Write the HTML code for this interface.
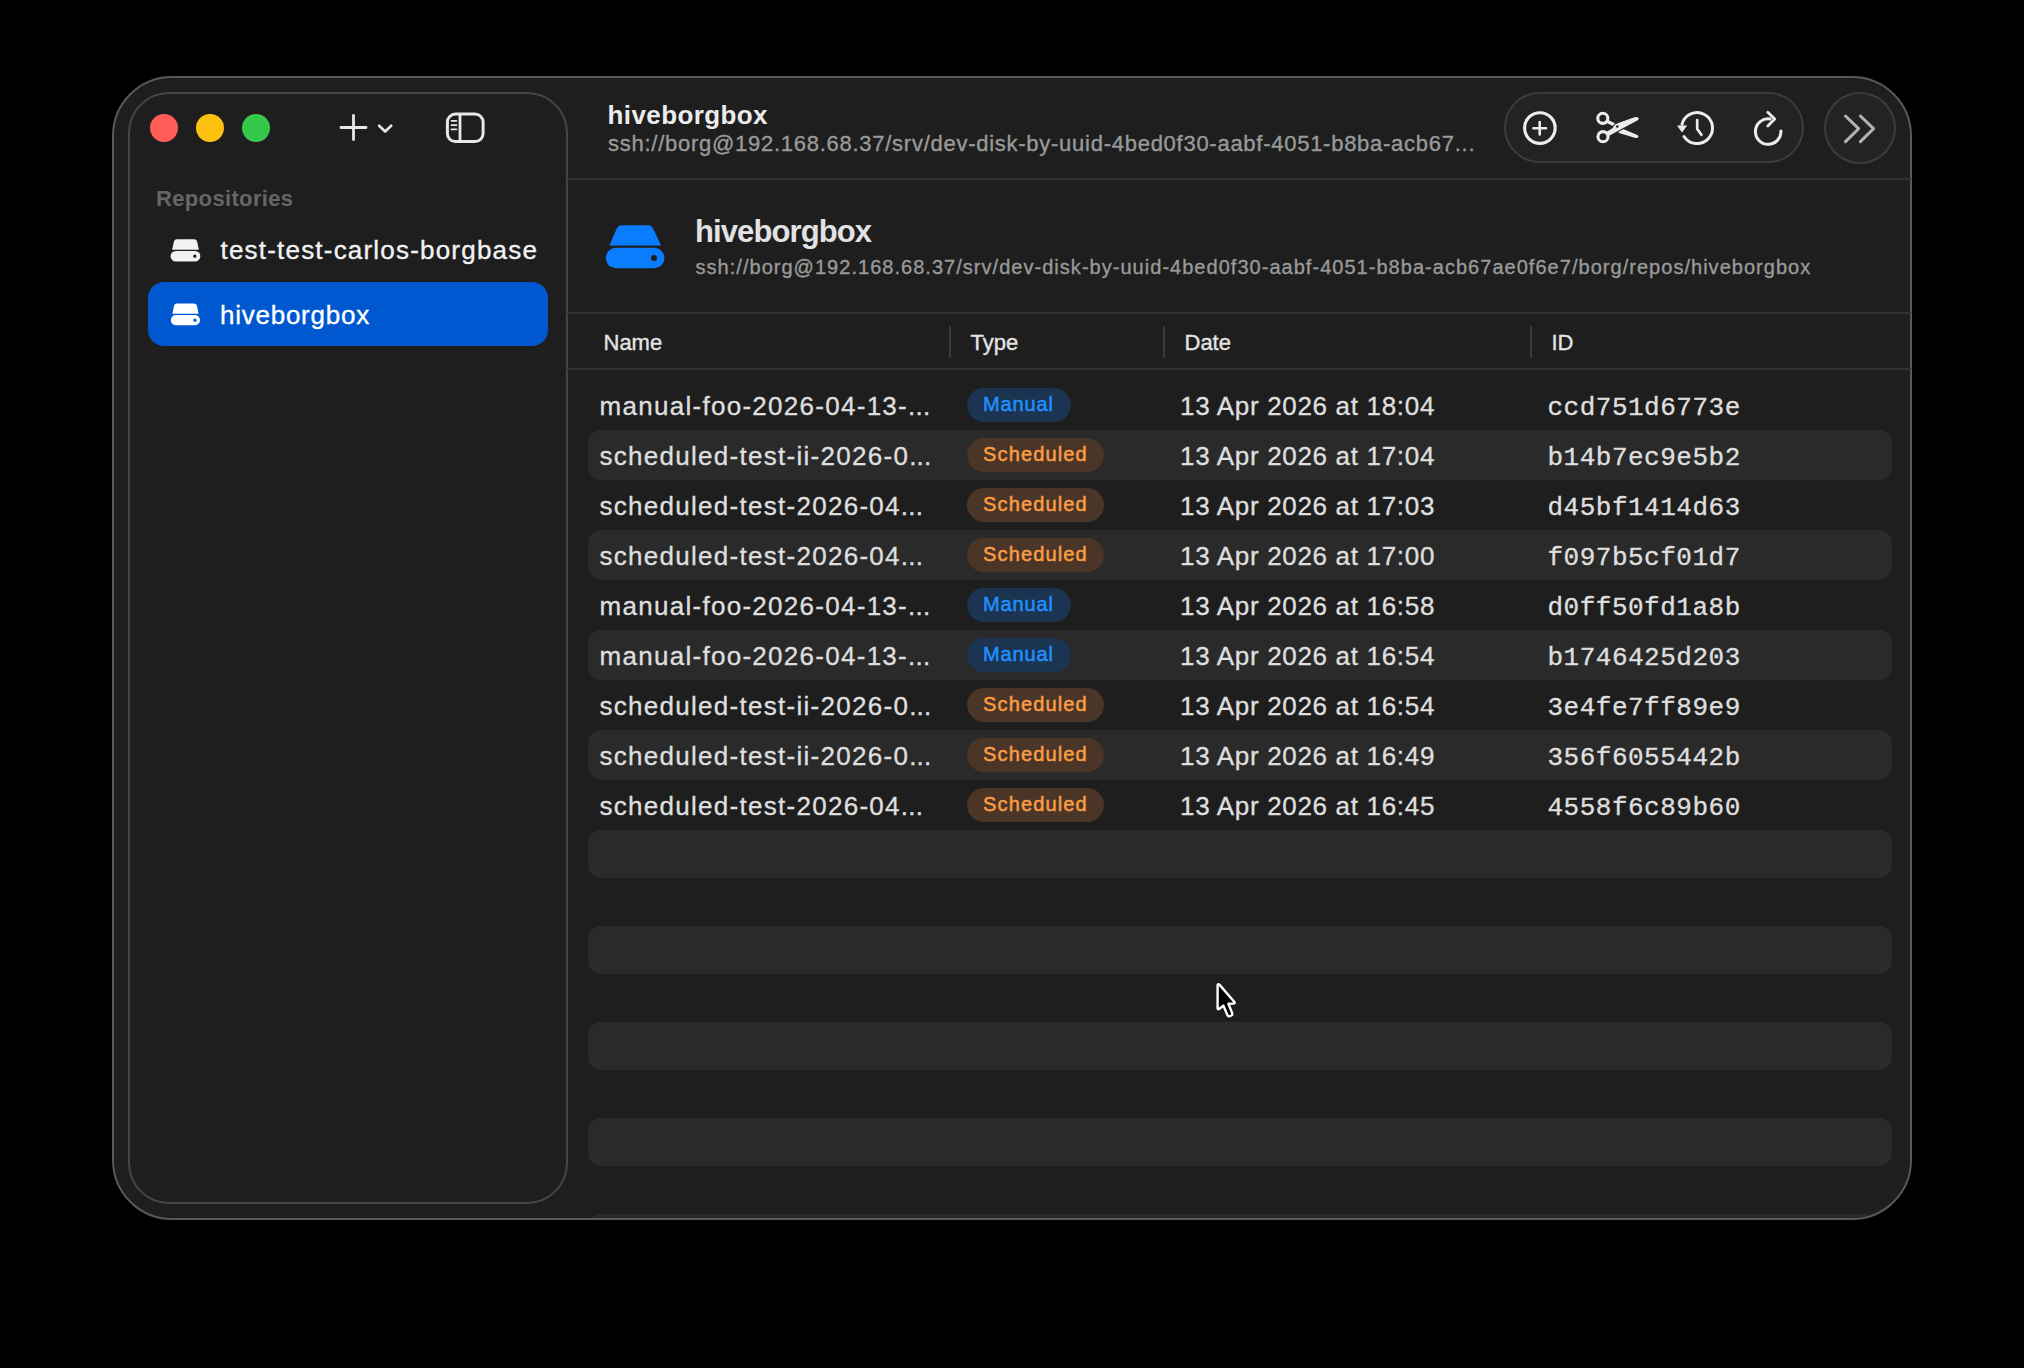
<!DOCTYPE html>
<html><head><meta charset="utf-8">
<style>
html,body{margin:0;padding:0;width:2024px;height:1368px;overflow:hidden;background:#000;}
body{font-family:"Liberation Sans",sans-serif;position:relative;}
.a{position:absolute;}
.t{position:absolute;white-space:pre;line-height:1;-webkit-text-stroke:0.35px currentColor;}
.win{left:112px;top:76px;width:1796px;height:1140px;border:2px solid #585858;border-radius:60px;background:#1e1e1e;overflow:hidden;}
.side{left:128px;top:92px;width:436px;height:1108px;border:2px solid #444444;border-radius:41px;background:#1e1e1e;}
.light{width:28px;height:28px;border-radius:50%;top:114px;}
.hl{height:2px;background:#313131;}
.vl{width:2px;background:#3a3a3a;top:326px;height:32px;}
.strip{left:588px;width:1304px;background:#2a2a2a;border-radius:13px;}
.name{left:599.5px;font-size:26px;letter-spacing:1.28px;color:#dedede;}
.dots{letter-spacing:0.2px;}
.date{left:1180px;font-size:26px;letter-spacing:0.68px;color:#dedede;}
.id{left:1547.5px;font-family:"Liberation Mono",monospace;font-size:26px;letter-spacing:0.5px;color:#dedede;}
.badge{left:967px;height:34px;border-radius:17px;}
.badge span{position:absolute;left:16px;top:0;white-space:pre;line-height:1;font-size:20px;font-weight:400;-webkit-text-stroke:0.5px currentColor;}
.man{width:104px;background:#1b3452;}
.man span{color:#2190ff;letter-spacing:0.85px;}
.sch{width:137px;background:#4a3526;}
.sch span{color:#fb9d45;letter-spacing:1.15px;}
.btn{border:2px solid #3c3c3c;background:#232323;}
</style></head>
<body>
<div class="a win"><div class="a strip" style="left:474px;top:1136px;height:48px;"></div></div>
<div class="a side"></div>

<!-- traffic lights -->
<div class="a light" style="left:150px;background:#ff5b57;"></div>
<div class="a light" style="left:196px;background:#fdc10f;"></div>
<div class="a light" style="left:242px;background:#34c84a;"></div>

<!-- plus + chevron -->
<svg class="a" style="left:330px;top:105px" width="70" height="45" viewBox="330 105 70 45">
  <path d="M353.5 115.5 V139.5 M341 127.5 H366" stroke="#e8e8e8" stroke-width="2.8" stroke-linecap="round" fill="none"/>
  <path d="M379.1 125.7 L385.2 131.5 L391.2 125.7" stroke="#e8e8e8" stroke-width="2.6" stroke-linecap="round" stroke-linejoin="round" fill="none"/>
</svg>
<!-- sidebar toggle -->
<svg class="a" style="left:440px;top:105px" width="52" height="45" viewBox="440 105 52 45">
  <rect x="447.4" y="114.1" width="35.7" height="27.5" rx="8" stroke="#e8e8e8" stroke-width="3" fill="none"/>
  <path d="M460 114 V141" stroke="#e8e8e8" stroke-width="2.8"/>
  <path d="M451.5 120.8 H456.4 M451.5 125.2 H456.4 M451.5 129.4 H456.4" stroke="#e8e8e8" stroke-width="1.8" stroke-linecap="round"/>
</svg>

<!-- sidebar -->
<div class="t" style="left:156px;top:188px;font-size:22px;font-weight:700;letter-spacing:0.35px;color:#666666;-webkit-text-stroke:0;">Repositories</div>
<svg class="a" style="left:168px;top:236px" width="36" height="30" viewBox="168 236 36 30">
  <path d="M177 239.3 H194.2 Q196.4 239.3 197.1 241.4 L198.9 249.7 H172.1 L173.9 241.4 Q174.6 239.3 177 239.3 Z" fill="#f2f2f2"/>
  <rect x="170.6" y="251" width="29.7" height="10.5" rx="5.2" fill="#f2f2f2"/>
  <circle cx="194.8" cy="256.2" r="1.6" fill="#1e1e1e"/>
</svg>
<div class="t" style="left:220.5px;top:237px;font-size:26px;letter-spacing:1.2px;color:#f2f2f2;">test-test-carlos-borgbase</div>
<div class="a" style="left:148px;top:282px;width:400px;height:64px;border-radius:16px;background:#0058d0;"></div>
<svg class="a" style="left:168px;top:300px" width="36" height="30" viewBox="168 300 36 30">
  <path d="M177 303.5 H194 Q196.2 303.5 196.9 305.6 L198.6 313.8 H172.4 L174.1 305.6 Q174.8 303.5 177 303.5 Z" fill="#ffffff"/>
  <rect x="170.8" y="315" width="29.2" height="10.3" rx="5.1" fill="#ffffff"/>
  <circle cx="195" cy="320.2" r="1.6" fill="#0058d0"/>
</svg>
<div class="t" style="left:220px;top:302px;font-size:26px;letter-spacing:0.75px;color:#ffffff;">hiveborgbox</div>

<!-- toolbar -->
<div class="t" style="left:607.5px;top:101.5px;font-size:26px;font-weight:700;letter-spacing:0.4px;color:#ececec;-webkit-text-stroke:0;">hiveborgbox</div>
<div class="t" style="left:608px;top:133px;font-size:22px;letter-spacing:0.735px;color:#9a9a9a;">ssh://borg@192.168.68.37/srv/dev-disk-by-uuid-4bed0f30-aabf-4051-b8ba-acb67...</div>
<div class="a hl" style="left:567px;top:178px;width:1344px;"></div>

<div class="a btn" style="left:1504px;top:92px;width:296px;height:67px;border-radius:36px;"></div>
<div class="a btn" style="left:1824px;top:92px;width:68px;height:68px;border-radius:50%;"></div>

<svg class="a" style="left:1500px;top:90px" width="420" height="80" viewBox="1500 90 420 80">
  <g stroke="#ececec" fill="none" stroke-linecap="round">
    <circle cx="1539.85" cy="128.05" r="15.3" stroke-width="3.2"/>
    <path d="M1539.7 122 V134.5 M1533.4 128.2 H1546" stroke-width="2.6"/>
    <!-- history -->
    <path d="M1682 124.3 A15.5 15.5 0 1 1 1684 136.5" stroke-width="3"/>
    <path d="M1697.2 120.2 V129 L1701.4 134.8" stroke-width="2.7" stroke-linejoin="round"/>
    <!-- refresh -->
    <path d="M1770 118.95 A12.75 12.75 0 1 0 1780.9 130.9" stroke-width="3"/>
    <path d="M1767.8 112.3 L1774.7 119 L1767.8 125.9" stroke-width="2.8" stroke-linejoin="round"/>
    <!-- chevrons -->
    <path d="M1845.5 116 L1858.6 128.7 L1845.5 141.6 M1860.4 116 L1873.5 128.7 L1860.4 141.6" stroke="#b2b2b2" stroke-width="3" stroke-linejoin="round"/>
  </g>
  <g fill="#ececec">
    <path d="M1607 121.2 L1614.6 125" stroke="#ececec" stroke-width="3.2" stroke-linecap="round"/>
    <path d="M1618 131 L1622.5 128.8 L1637.4 135 Q1639 136.2 1638.4 137.2 Q1637.6 138.2 1634.6 137.8 L1619 133 Z"/>
    <path d="M1606.5 131.8 L1612.5 128.3 L1614.8 124.8 L1619 122.7 L1634.5 117.2 Q1637.8 116.4 1638.8 118.4 Q1638.9 119.6 1637.3 120.5 L1620.5 129.6 L1608.8 136 Z" stroke="#232323" stroke-width="2" paint-order="stroke"/>
    <circle cx="1602.8" cy="118.3" r="5.05" stroke="#ececec" stroke-width="3.1" fill="none"/>
    <circle cx="1603" cy="136.7" r="5.05" stroke="#ececec" stroke-width="3.1" fill="none"/>
    <circle cx="1617.3" cy="126.5" r="1.25" fill="#232323"/>
    <path d="M1677 125.6 H1687.2 L1682 132.6 Z"/>
  </g>
</svg>

<!-- header -->
<svg class="a" style="left:600px;top:220px" width="70" height="54" viewBox="600 220 70 54">
  <path d="M621.7 225.2 H648 Q651.8 225.2 653.6 229.5 L661 245.4 H609.5 L616.3 229.5 Q618 225.2 621.7 225.2 Z" fill="#0a7dff"/>
  <rect x="605.8" y="247.7" width="58.6" height="20.5" rx="10.2" fill="#0a7dff"/>
  <circle cx="654" cy="257.9" r="3" fill="#1e1e1e"/>
</svg>
<div class="t" style="left:695px;top:216px;font-size:31px;font-weight:700;letter-spacing:-0.9px;-webkit-text-stroke:0;color:#e2e2e2;">hiveborgbox</div>
<div class="t" style="left:695.5px;top:256.8px;font-size:20px;letter-spacing:1.03px;color:#9a9a9a;">ssh://borg@192.168.68.37/srv/dev-disk-by-uuid-4bed0f30-aabf-4051-b8ba-acb67ae0f6e7/borg/repos/hiveborgbox</div>
<div class="a hl" style="left:567px;top:312px;width:1344px;"></div>

<!-- column headers -->
<div class="t" style="left:603.5px;top:332.4px;font-size:22px;color:#e4e4e4;">Name</div>
<div class="t" style="left:970.5px;top:332.4px;font-size:22px;color:#e4e4e4;">Type</div>
<div class="t" style="left:1184.5px;top:332.4px;font-size:22px;color:#e4e4e4;">Date</div>
<div class="t" style="left:1551.5px;top:332.4px;font-size:22px;color:#e4e4e4;">ID</div>
<div class="a vl" style="left:949px;"></div>
<div class="a vl" style="left:1163px;"></div>
<div class="a vl" style="left:1530px;"></div>
<div class="a hl" style="left:567px;top:368px;width:1344px;"></div>

<!-- strips -->
<div class="a strip" style="top:430px;height:50px;"></div>
<div class="a strip" style="top:530px;height:50px;"></div>
<div class="a strip" style="top:630px;height:50px;"></div>
<div class="a strip" style="top:730px;height:50px;"></div>
<div class="a strip" style="top:830px;height:48px;"></div>
<div class="a strip" style="top:926px;height:48px;"></div>
<div class="a strip" style="top:1022px;height:48px;"></div>
<div class="a strip" style="top:1118px;height:48px;"></div>


<!-- rows -->
<div class="t name" style="top:393px;">manual-foo-2026-04-13-<span class="dots">...</span></div>
<div class="a badge man" style="top:388px;"><span style="top:6.3px">Manual</span></div>
<div class="t date" style="top:393px;">13 Apr 2026 at 18:04</div>
<div class="t id" style="top:395px;">ccd751d6773e</div>

<div class="t name" style="top:443px;">scheduled-test-ii-2026-0<span class="dots">...</span></div>
<div class="a badge sch" style="top:438px;"><span style="top:6.3px">Scheduled</span></div>
<div class="t date" style="top:443px;">13 Apr 2026 at 17:04</div>
<div class="t id" style="top:445px;">b14b7ec9e5b2</div>

<div class="t name" style="top:493px;">scheduled-test-2026-04<span class="dots">...</span></div>
<div class="a badge sch" style="top:488px;"><span style="top:6.3px">Scheduled</span></div>
<div class="t date" style="top:493px;">13 Apr 2026 at 17:03</div>
<div class="t id" style="top:495px;">d45bf1414d63</div>

<div class="t name" style="top:543px;">scheduled-test-2026-04<span class="dots">...</span></div>
<div class="a badge sch" style="top:538px;"><span style="top:6.3px">Scheduled</span></div>
<div class="t date" style="top:543px;">13 Apr 2026 at 17:00</div>
<div class="t id" style="top:545px;">f097b5cf01d7</div>

<div class="t name" style="top:593px;">manual-foo-2026-04-13-<span class="dots">...</span></div>
<div class="a badge man" style="top:588px;"><span style="top:6.3px">Manual</span></div>
<div class="t date" style="top:593px;">13 Apr 2026 at 16:58</div>
<div class="t id" style="top:595px;">d0ff50fd1a8b</div>

<div class="t name" style="top:643px;">manual-foo-2026-04-13-<span class="dots">...</span></div>
<div class="a badge man" style="top:638px;"><span style="top:6.3px">Manual</span></div>
<div class="t date" style="top:643px;">13 Apr 2026 at 16:54</div>
<div class="t id" style="top:645px;">b1746425d203</div>

<div class="t name" style="top:693px;">scheduled-test-ii-2026-0<span class="dots">...</span></div>
<div class="a badge sch" style="top:688px;"><span style="top:6.3px">Scheduled</span></div>
<div class="t date" style="top:693px;">13 Apr 2026 at 16:54</div>
<div class="t id" style="top:695px;">3e4fe7ff89e9</div>

<div class="t name" style="top:743px;">scheduled-test-ii-2026-0<span class="dots">...</span></div>
<div class="a badge sch" style="top:738px;"><span style="top:6.3px">Scheduled</span></div>
<div class="t date" style="top:743px;">13 Apr 2026 at 16:49</div>
<div class="t id" style="top:745px;">356f6055442b</div>

<div class="t name" style="top:793px;">scheduled-test-2026-04<span class="dots">...</span></div>
<div class="a badge sch" style="top:788px;"><span style="top:6.3px">Scheduled</span></div>
<div class="t date" style="top:793px;">13 Apr 2026 at 16:45</div>
<div class="t id" style="top:795px;">4558f6c89b60</div>

<!-- cursor -->
<svg class="a" style="left:1210px;top:976px" width="36" height="48" viewBox="1210 976 36 48">
  <path d="M1217.6 985.8 V1008 Q1217.6 1010 1219.4 1008.8 L1223.4 1005.6 L1227.4 1015 Q1228.4 1017 1230.4 1016 L1231.4 1015.5 Q1232.8 1014.7 1232.1 1012.9 L1228.4 1003.8 L1233.6 1003.5 Q1235.6 1003.3 1234.2 1001.7 L1219.4 984.6 Q1217.6 983.2 1217.6 985.8 Z" fill="#000" stroke="#fff" stroke-width="2.4" stroke-linejoin="round"/>
</svg>
</body></html>
